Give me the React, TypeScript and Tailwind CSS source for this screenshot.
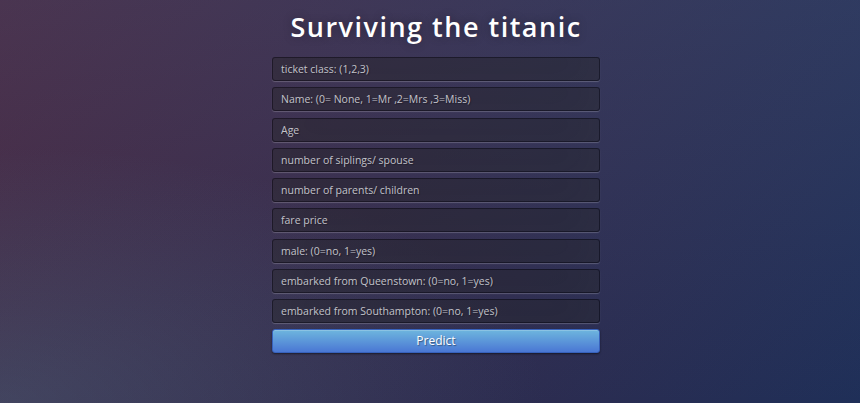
const fields = [
  'ticket class: (1,2,3)',
  'Name: (0= None, 1=Mr ,2=Mrs ,3=Miss)',
  'Age',
  'number of siplings/ spouse',
  'number of parents/ children',
  'fare price',
  'male: (0=no, 1=yes)',
  'embarked from Queenstown: (0=no, 1=yes)',
  'embarked from Southampton: (0=no, 1=yes)',
];

export default function App() {
  return (
    <div className="h-[403px] w-full overflow-hidden bg-[#2a2f55] bg-[radial-gradient(ellipse_at_0%_100%,rgba(70,135,160,.3)_0%,rgba(70,135,160,0)_45%),linear-gradient(to_bottom,rgba(50,120,170,.2)_0%,rgba(50,120,170,0)_100%),linear-gradient(135deg,#50243a_0%,#1f2f58_100%)] font-['Open_Sans',sans-serif]">
      <div className="flex flex-col items-center pl-3">
        <h1 className="mt-[9px] text-[27px] leading-[36px] font-semibold tracking-[1.5px] text-white [text-shadow:0_0_10px_rgba(0,0,0,0.3)]">
          Surviving the titanic
        </h1>

        <form className="mt-[12px] flex w-[328px] flex-col gap-[6.25px]">
          {fields.map((label) => (
            <input
              key={label}
              type="text"
              placeholder={label}
              className="h-[24px] w-full rounded-[3px] border border-black/30 bg-black/30 px-[8px] text-[10.5px] text-white shadow-[inset_0_-5px_45px_rgba(100,100,100,0.2),0_1px_1px_rgba(255,255,255,0.2)] outline-none [text-shadow:1px_1px_1px_rgba(0,0,0,0.3)] placeholder:text-[#c2c2c9]"
            />
          ))}
          <button
            type="button"
            className="h-[24px] w-full rounded-[3px] border border-[#3762bc] bg-[linear-gradient(to_bottom,#6eb6de,#4a77d4)] text-[12px] text-white shadow-[inset_0_1px_0_rgba(255,255,255,0.2),0_1px_2px_rgba(0,0,0,0.5)] [text-shadow:1px_1px_1px_rgba(0,0,0,0.4)]"
          >
            Predict
          </button>
        </form>
      </div>
    </div>
  );
}
